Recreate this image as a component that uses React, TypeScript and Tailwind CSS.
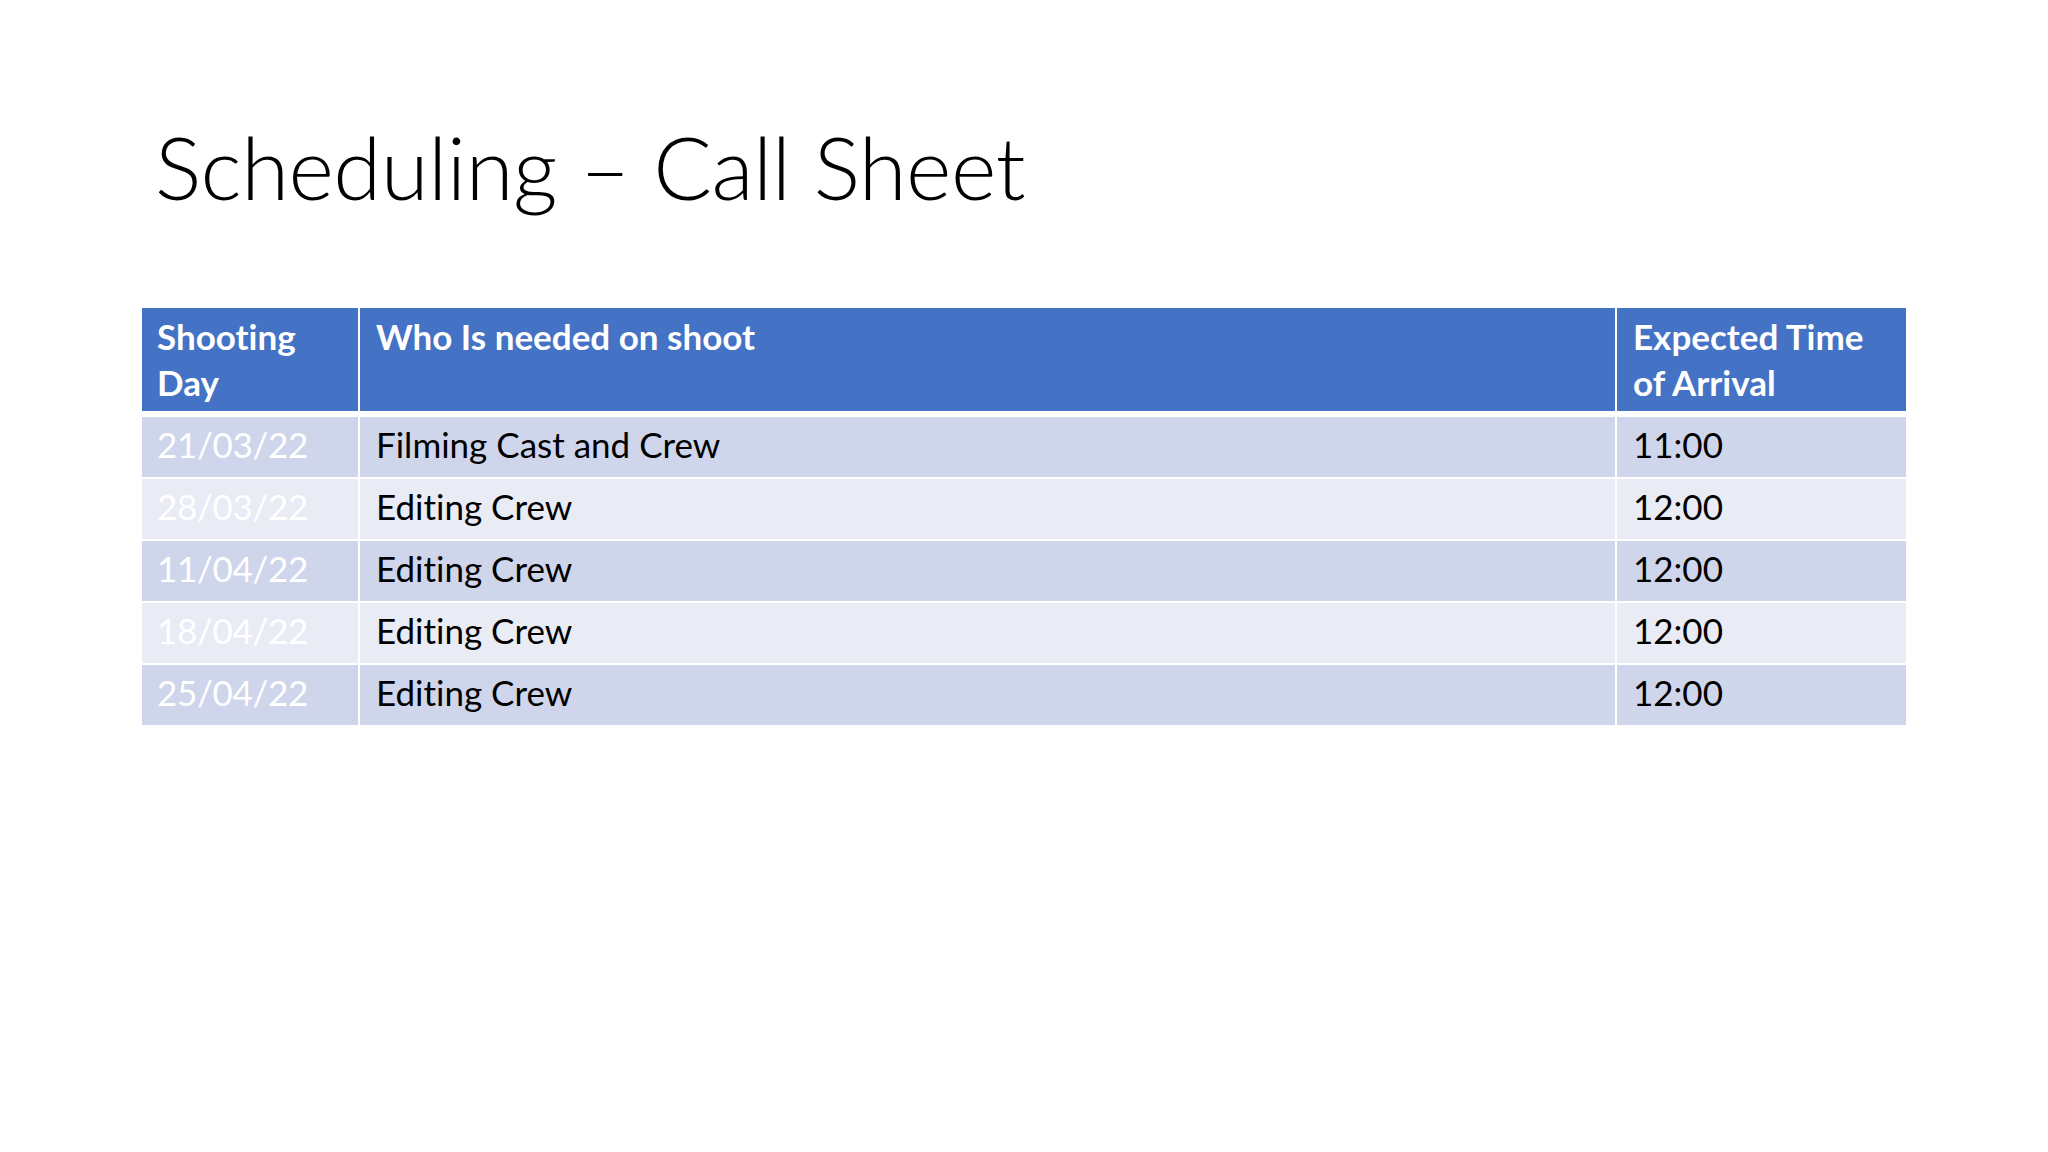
const rows = [
  { day: "21/03/22", who: "Filming Cast and Crew", eta: "11:00" },
  { day: "28/03/22", who: "Editing Crew", eta: "12:00" },
  { day: "11/04/22", who: "Editing Crew", eta: "12:00" },
  { day: "18/04/22", who: "Editing Crew", eta: "12:00" },
  { day: "25/04/22", who: "Editing Crew", eta: "12:00" },
];

export default function App() {
  return (
    <div className="w-[2048px] h-[1152px] bg-white font-['Lato',sans-serif] [font-variant-ligatures:none] text-black overflow-hidden">
      <h1 className="pl-[155px] pt-[112px] text-[87px] leading-[110px] font-light tracking-[-0.5px]">
        Scheduling – Call Sheet
      </h1>

      <div className="ml-[142px] mt-[86px] w-[1764px] flex flex-col">
        <div className="grid grid-cols-[216px_1255px_289px] gap-x-[2px] h-[103px] text-white font-bold text-[35px] leading-[46px]">
          <div className="bg-[#4472c4] px-[15px] pt-[5px]">Shooting<br />Day</div>
          <div className="bg-[#4472c4] px-[16px] pt-[5px]">Who Is needed on shoot</div>
          <div className="bg-[#4472c4] px-[16px] pt-[5px]">Expected Time<br />of Arrival</div>
        </div>

        <div className="flex flex-col gap-y-[2px] mt-[6px]">
          {rows.map((r, i) => {
            const bg = i % 2 === 0 ? "bg-[#cfd5ea]" : "bg-[#e9ebf5]";
            return (
              <div key={i} className="grid grid-cols-[216px_1255px_289px] gap-x-[2px] h-[60px] text-[35px] leading-[40px]">
                <div className={`${bg} px-[15px] pt-[7px] text-white tracking-[-0.3px]`}>{r.day}</div>
                <div className={`${bg} px-[16px] pt-[7px]`}>{r.who}</div>
                <div className={`${bg} px-[16px] pt-[7px]`}>{r.eta}</div>
              </div>
            );
          })}
        </div>
      </div>
    </div>
  );
}
